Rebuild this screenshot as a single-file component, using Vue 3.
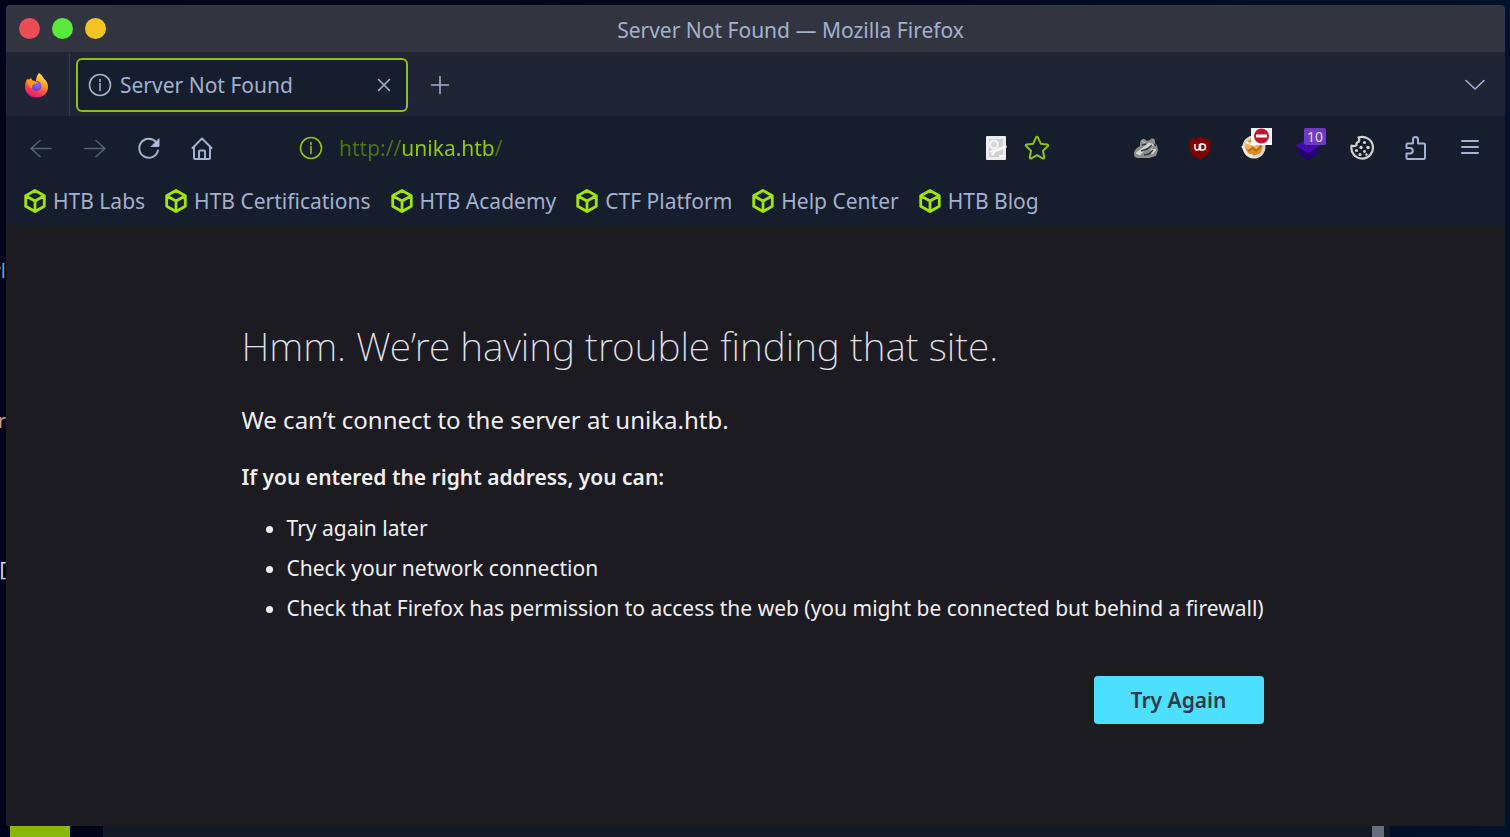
<script setup>
import { ref } from 'vue'

const address = ref('http://unika.htb/')
const bookmarks = ['HTB Labs', 'HTB Certifications', 'HTB Academy', 'CTF Platform', 'Help Center', 'HTB Blog']
const tips = [
  'Try again later',
  'Check your network connection',
  'Check that Firefox has permission to access the web (you might be connected but behind a firewall)'
]
</script>

<template>
  <div class="desktop">
    <span class="behind behind-a">yl</span>
    <span class="behind behind-b">cr</span>
    <span class="behind behind-c">[</span>

    <div class="window">
      <header class="titlebar">
        <div class="lights">
          <button class="light red" aria-label="Close"></button>
          <button class="light green" aria-label="Maximize"></button>
          <button class="light yellow" aria-label="Minimize"></button>
        </div>
        <span class="title">Server Not Found — Mozilla Firefox</span>
      </header>

      <div class="tabbar">
        <button class="firefox" aria-label="Firefox View">
          <svg width="26" height="26" viewBox="0 0 26 26">
            <defs>
              <linearGradient id="flame" x1="0.8" y1="0" x2="0.35" y2="1">
                <stop offset="0" stop-color="#fff44f" />
                <stop offset="0.4" stop-color="#ffa02b" />
                <stop offset="0.75" stop-color="#ff3b4a" />
                <stop offset="1" stop-color="#e0138c" />
              </linearGradient>
              <radialGradient id="globe" cx="0.6" cy="0.3" r="0.8">
                <stop offset="0" stop-color="#a85bff" />
                <stop offset="1" stop-color="#4a45c9" />
              </radialGradient>
            </defs>
            <path d="M16 1c3 2 4 4 5 6 2 1 4 4 4 8 0 6-5 10.500-11.500 10.500S2 21 2 14.500C2 11 3 8.500 4.500 6.500L5 9l3-3 1 2.500 4 0.500c0-3 1-6 3-8z" fill="url(#flame)" />
            <circle cx="13.500" cy="14" r="5" fill="url(#globe)" />
            <path d="M4 8l4-1.500 2 2.500 4 1c0 2-3 1.500-4 3-1 1.200-.500 2-1 3-3-1-5-4-5-8z" fill="#ff9a16" />
          </svg>
        </button>
        <div class="tab">
          <svg class="line" width="24" height="24" viewBox="0 0 24 24">
            <circle cx="12" cy="12" r="10.500" /><path d="M12 10.500v7M12 6.500v2" />
          </svg>
          <span class="tab-name">Server Not Found</span>
          <button class="close" aria-label="Close tab">
            <svg class="line" width="14" height="14" viewBox="0 0 14 14"><path d="M1.500 1.500l11 11M12.500 1.500l-11 11" /></svg>
          </button>
        </div>
        <button class="plus" aria-label="New tab">
          <svg class="line" width="20" height="20" viewBox="0 0 20 20"><path d="M10 1.500v17M1.500 10h17" /></svg>
        </button>
        <button class="list-tabs" aria-label="List all tabs">
          <svg class="line" width="20" height="12" viewBox="0 0 20 12"><path d="M1 1.500l9 8.500 9-8.500" /></svg>
        </button>
      </div>

      <nav class="toolbar">
        <div class="group nav-buttons">
          <button class="dim" aria-label="Back">
            <svg class="line" width="24" height="24" viewBox="0 0 24 24"><path d="M22 12.500H2M11 4.500l-9 8 9 8" /></svg>
          </button>
          <button class="dim" aria-label="Forward">
            <svg class="line" width="24" height="24" viewBox="0 0 24 24"><path d="M1.500 12.500H22M13 4.500l9 8-9 8" /></svg>
          </button>
          <button aria-label="Reload">
            <svg class="line thick" width="24" height="24" viewBox="0 0 24 24">
              <path d="M21 14.500A9.500 9.500 0 1 1 19 6" /><path d="M22 3v7.500h-7.500z" fill="#b4bede" stroke-width="1" />
            </svg>
          </button>
          <button aria-label="Home">
            <svg class="line thick" width="24" height="24" viewBox="0 0 24 24">
              <path d="M1.500 12L11 2.500l9.500 9.500M3 11v11a1 1 0 0 0 1 1h14a1 1 0 0 0 1-1V11M8 23v-7.500a1 1 0 0 1 1-1h4a1 1 0 0 1 1 1V23" />
            </svg>
          </button>
        </div>

        <div class="urlbar">
          <svg class="line lime" width="24" height="24" viewBox="0 0 24 24">
            <circle cx="12" cy="12" r="10.500" /><path d="M12 10.500v7M12 6.500v2" />
          </svg>
          <input v-model="address" class="address" type="text" aria-label="Address" spellcheck="false" />
          <button aria-label="Reader notes">
            <svg width="24" height="26" viewBox="0 0 24 26">
              <rect x="2" y="1" width="20" height="24" rx="1" fill="#ededee" />
              <rect x="5" y="4" width="14" height="18" fill="#cfd0d3" />
              <circle cx="10" cy="9.500" r="4" fill="#d9dadd" stroke="#f4f4f5" stroke-width="2" />
              <path d="M8 20l3-4L22.500 11" fill="none" stroke="#fff" stroke-width="2.500" />
              <path d="M6 17l4-2M15 21h5" stroke="#f4f4f5" stroke-width="2" />
            </svg>
          </button>
          <button aria-label="Bookmark this page">
            <svg class="line lime thick" width="26" height="26" viewBox="0 0 26 26">
              <path d="M12 2.700q1-1.700 2 0l2.800 6 6.400.8q1.700.5.500 1.800l-4.700 4.500 1.200 6.500q0 1.700-1.600 1L13 20.200l-5.600 3.100q-1.600.7-1.600-1L7 15.800l-4.700-4.500q-1.200-1.300.5-1.800l6.400-.8z" />
            </svg>
          </button>
        </div>

        <div class="group extensions">
          <button aria-label="Badger">
            <svg width="26" height="24" viewBox="0 0 26 24">
              <path d="M1 18c0-4 3-6 6-8 0-3 0-6 3-7 2-.5 3 1 4 2l3-1c1-2 5-2 5 1 0 2 0 3 2 4l1 5-2 6-7 2H6c-3 0-5-1-5-4z" fill="#8d8e8d" />
              <path d="M3 17l7-5 6-5 5 2-8 3-6 7zM9 5l3 2M18 13l5 1-4 4z" fill="#d5d6d3" stroke="#d5d6d3" />
              <path d="M8 15l6-2 5-4M11 19l5-1 4-4M9 9l4-1M21 8l2 2" fill="none" stroke="#34383c" stroke-width="1.500" />
            </svg>
          </button>
          <button aria-label="Content blocker">
            <svg width="24" height="26" viewBox="0 0 24 26">
              <path d="M12 1.500c3 2 7 3 10.500 3v9c0 5-5 8-10.500 11C6.500 21.500 1.500 18.500 1.500 13.500v-9C5 4.500 9 3.500 12 1.500z" fill="#800000" />
              <path d="M7 9v3.500Q7 15 9.200 15t2.200-2.500V9M12.500 9v6h2a3 3 0 0 0 0-6z" fill="none" stroke="#fff" stroke-width="1.500" />
            </svg>
          </button>
          <button aria-label="Proxy">
            <svg width="38" height="42" viewBox="-6 0 38 42">
              <circle cx="13" cy="20" r="11.500" fill="#ddd8d0" />
              <circle cx="13" cy="20" r="8.500" fill="#e58b24" />
              <path d="M3 15l4 9 4-5 5 3 5-7-8 1z" fill="#f6b352" />
              <path d="M1 19l5 8 6 2M4 15l9 3 7-2" fill="none" stroke="#f4efe6" stroke-width="2" />
              <path d="M7 24l5-3 3 3 5-5" fill="none" stroke="#a96724" stroke-width="1.500" />
              <rect x="10" y="1" width="21" height="17" fill="#fff" />
              <circle cx="20.500" cy="9" r="7.500" fill="#c1142f" />
              <rect x="15" y="7.500" width="11" height="3" fill="#fff" />
            </svg>
          </button>
          <button class="badged" aria-label="Technology profiler">
            <svg width="26" height="26" viewBox="0 0 26 26">
              <path d="M1 17l12-7 12 7-12 7.500z" fill="#260078" />
              <path d="M1 10.500L13 3l12 7.500-12 8z" fill="#4608ad" />
            </svg>
            <span class="badge">10</span>
          </button>
          <button aria-label="Cookies">
            <svg width="26" height="26" viewBox="0 0 26 26">
              <path d="M10 2.400A10.800 10.800 0 1 1 2.600 10.500q3 1.500 5-.5-.6-2.500 2-3.200 1.400-2-.1-4.400z" fill="none" stroke="#d2d3d3" stroke-width="2.200" stroke-linejoin="round" />
              <g fill="#d2d3d3">
                <circle cx="15.500" cy="7.500" r="1.600" /><circle cx="12" cy="12.500" r="1.700" /><circle cx="19" cy="12.500" r="1.800" />
                <circle cx="7.500" cy="15.500" r="1.600" /><circle cx="15.500" cy="16.500" r="1.400" /><circle cx="11" cy="19.500" r="1.600" /><circle cx="17.500" cy="19.500" r="1.200" />
              </g>
            </svg>
          </button>
          <button aria-label="Extensions">
            <svg class="line thick" width="24" height="26" viewBox="0 0 24 26">
              <path d="M3.500 8.500h5.500V4.500a2.500 2.500 0 0 1 5 0v4h6a1 1 0 0 1 1 1V23a1 1 0 0 1-1 1h-16.500a1 1 0 0 1-1-1v-4.500h3.500a2.800 2.800 0 0 0 0-5.600H2.500V9.500a1 1 0 0 1 1-1z" />
            </svg>
          </button>
          <button aria-label="Menu">
            <svg class="line thick" width="20" height="18" viewBox="0 0 20 18"><path d="M2 2h16M2 8h16M2 14h16" /></svg>
          </button>
        </div>
      </nav>

      <div class="bookmarks">
        <a v-for="name in bookmarks" :key="name" href="#" class="bookmark">
          <svg width="22" height="24" viewBox="0 0 22 24">
            <path d="M11 1.500l9.300 5.300v10.400L11 22.500l-9.300-5.300V6.800zM2 7l9 5 9-5M11 12v10" />
          </svg>
          {{ name }}
        </a>
      </div>

      <main class="page">
        <section class="error">
          <h1>Hmm. We’re having trouble finding that site.</h1>
          <p class="lead">We can’t connect to the server at unika.htb.</p>
          <p class="hint">If you entered the right address, you can:</p>
          <ul>
            <li v-for="tip in tips" :key="tip">{{ tip }}</li>
          </ul>
          <button class="retry">Try Again</button>
        </section>
      </main>
    </div>

    <footer class="strip">
      <div class="strip-lime"></div>
      <div class="strip-term"><div class="strip-thumb"></div></div>
    </footer>
  </div>
</template>

<style>
html, body { background: #02051a; }
</style>

<style scoped>
* { box-sizing: border-box; }
.desktop {
  position: relative;
  min-height: 100vh;
  padding: 5px 5px 0 6px;
  display: flex;
  flex-direction: column;
  overflow: hidden;
  background: linear-gradient(90deg, #01031a 0%, #020720 60%, #02112c 100%);
  font-family: "Noto Sans", "Open Sans", sans-serif;
  font-size: 21px;
  color: #a3b0cf;
}
button {
  display: flex;
  align-items: center;
  justify-content: center;
  padding: 0;
  border: 0;
  background: none;
  color: inherit;
  font: inherit;
}
svg { display: block; flex: none; }
.line { fill: none; stroke: #a3b0cf; stroke-width: 1.6; stroke-linecap: round; stroke-linejoin: round; }
.thick { stroke-width: 2; }
.lime { stroke: #8fc400; }

.behind { position: absolute; left: 0; width: 6px; height: 24px; overflow: hidden; display: flex; justify-content: flex-end; font-size: 20px; line-height: 24px; }
.behind-a { top: 259px; color: #5d9fd6; }
.behind-b { top: 409px; color: #c0a48a; }
.behind-c { top: 557px; color: #d4dae4; }

.window {
  position: relative;
  flex: 1;
  display: flex;
  flex-direction: column;
  border-radius: 4px 4px 0 0;
  overflow: hidden;
  background: #1c1b22;
}
.titlebar {
  display: grid;
  grid-template-columns: 1fr auto 1fr;
  align-items: center;
  height: 47px;
  padding: 2px 13px 0;
  background: #32353f;
}
.title { margin-left: 70px; }
.lights { display: flex; gap: 12px; padding-bottom: 2px; }
.light { width: 21px; height: 21px; border-radius: 50%; }
.red { background: #ea4d54; }
.green { background: #5aea3c; }
.yellow { background: #f5c322; }

.tabbar { display: flex; align-items: center; height: 64px; padding-top: 1px; background: #1f2535; }
.firefox { width: 64px; height: 64px; padding-right: 4px; border-right: 1px solid #363c4b; }
.tab {
  display: flex;
  align-items: center;
  gap: 8px;
  width: 332px;
  height: 54px;
  margin-left: 6px;
  padding: 0 10px;
  border: 2px solid #8fc400;
  border-radius: 6px;
  background: #161d2c;
}
.tab-name { flex: 1; }
.close { width: 24px; height: 24px; }
.plus { width: 40px; height: 40px; margin-left: 12px; }
.list-tabs { width: 40px; height: 40px; margin-left: auto; margin-right: 10px; }

.toolbar { display: flex; align-items: center; height: 64px; padding: 0 8px 0 23px; background: #161d2c; }
.group { display: flex; align-items: center; }
.nav-buttons { gap: 30px; }
.dim { opacity: 0.45; }
.urlbar { flex: 1; display: flex; align-items: center; gap: 16px; margin: 0 69px 0 84px; }
.address {
  flex: 1;
  min-width: 0;
  height: 40px;
  padding: 0;
  border: 0;
  outline: 0;
  font: inherit;
  color: transparent;
  background: linear-gradient(90deg, #4c7310 0 62px, #93cd00 62px 156px, #4c7310 156px);
  -webkit-background-clip: text;
  background-clip: text;
}
.extensions button { width: 54px; }
.badged { position: relative; }
.badge {
  position: absolute;
  left: 23px;
  top: -7px;
  width: 22px;
  height: 17px;
  border-radius: 2px;
  background: #6b3cc0;
  color: #e4daf8;
  font-size: 14px;
  line-height: 17px;
}

.bookmarks { display: flex; align-items: center; gap: 20px; height: 45px; padding: 0 18px 4px; background: #161d2c; }
.bookmark { display: flex; align-items: center; gap: 7px; color: inherit; text-decoration: none; white-space: nowrap; }
.bookmark svg { fill: none; stroke: #a1e600; stroke-width: 2.800; stroke-linejoin: round; }

.page { flex: 1; padding: 93px 20px 40px; color: #f0f0f4; }
.error { display: flex; flex-direction: column; max-width: 1028px; margin: 0 auto; }
h1 { margin: 0; font-size: 39px; line-height: 56px; font-weight: 200; color: #e4e4ea; }
.lead { margin: 28px 0 0; font-size: 24px; line-height: 36px; }
.hint { margin: 23px 0 0; line-height: 32px; font-weight: 600; }
ul { margin: 15px 0 0; padding-left: 45px; }
li { line-height: 40px; }
.retry {
  align-self: flex-end;
  width: 170px;
  height: 48px;
  margin: 48px 6px 0 0;
  border-radius: 4px;
  background: #4cdfff;
  color: #2b3a48;
  font-weight: 600;
}

.strip { display: flex; height: 11px; padding-left: 4px; }
.strip-lime { width: 60px; background: #8ab80a; }
.strip-term { flex: 1; display: flex; justify-content: flex-end; margin: 0 115px 0 33px; padding-right: 6px; background: #111927; }
.strip-thumb { width: 12px; background: #696d81; }
</style>
